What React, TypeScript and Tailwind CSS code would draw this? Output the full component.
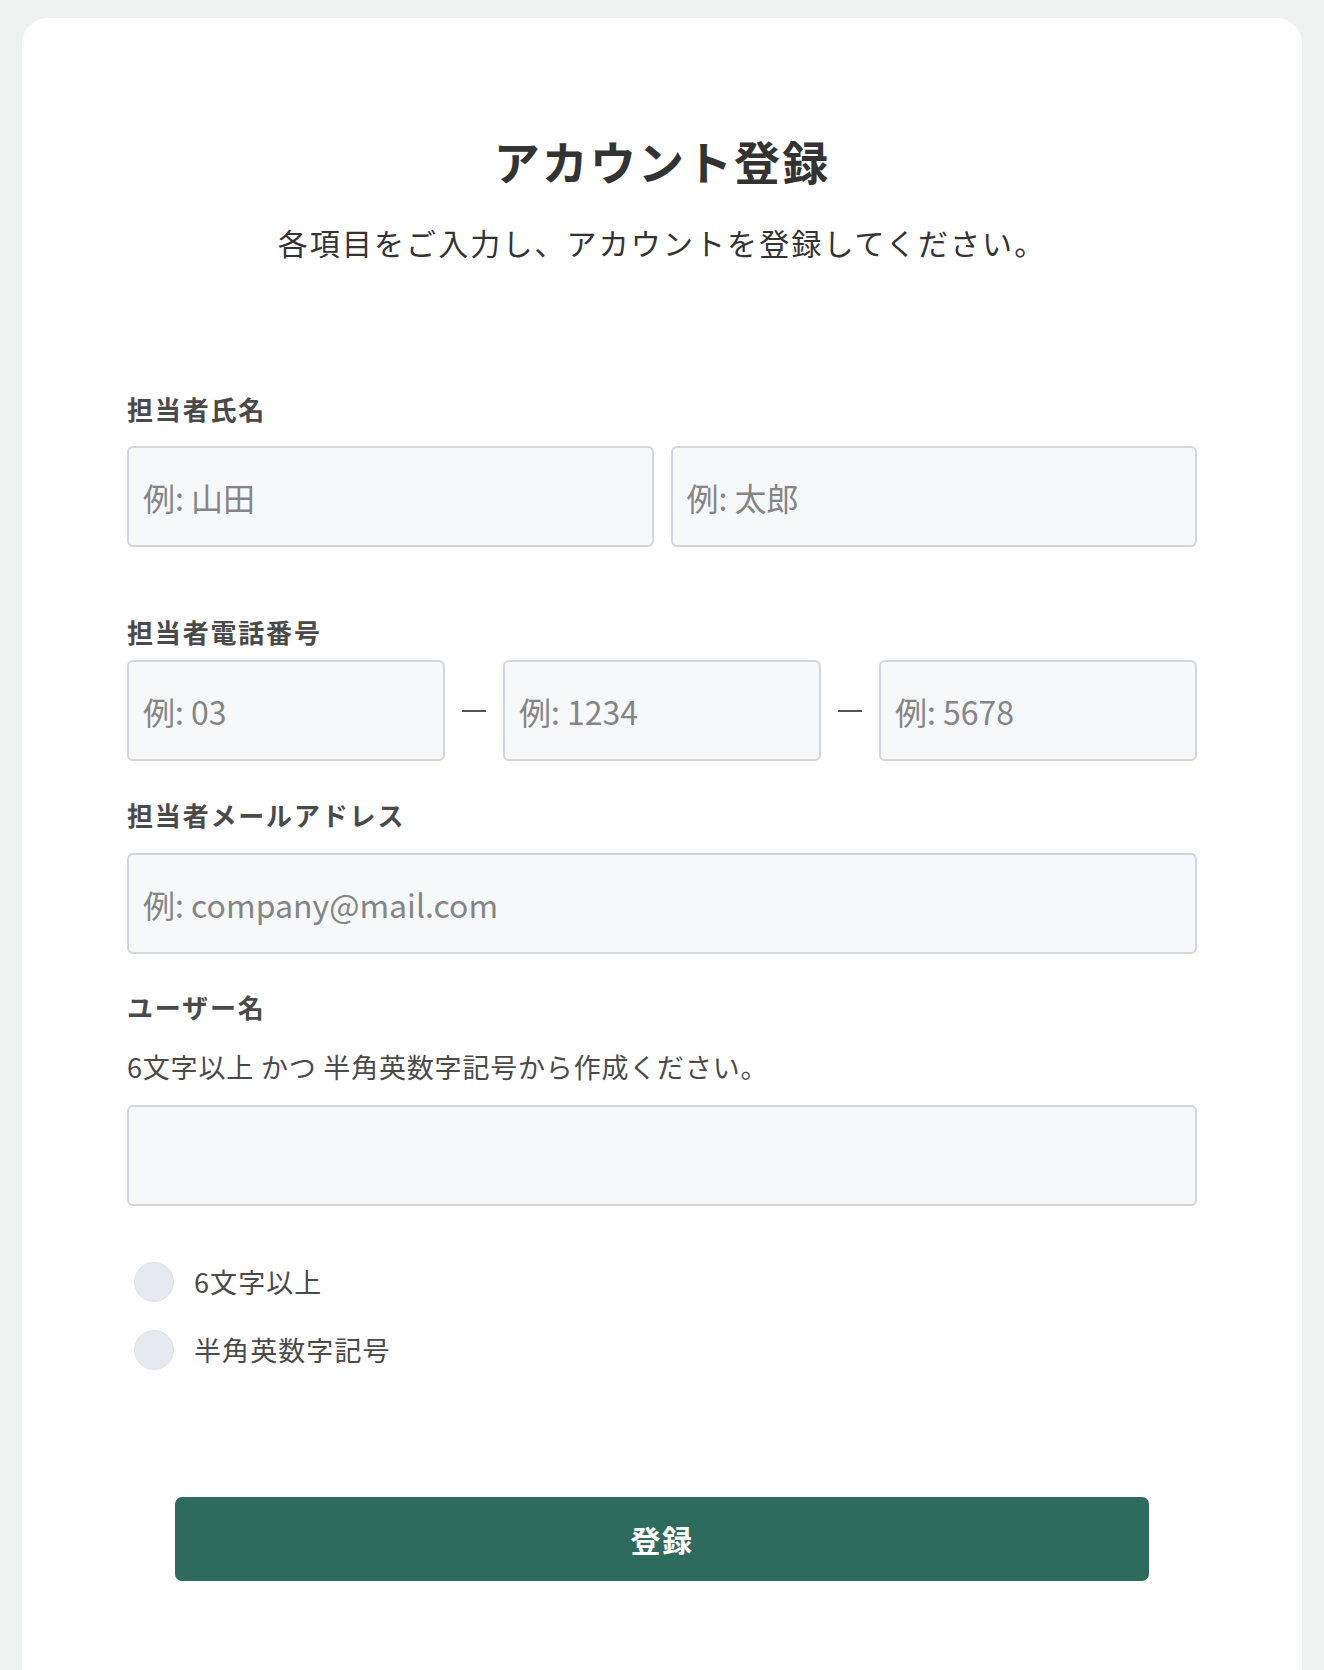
import { useState } from "react"

const inputClass =
  "block w-full h-[101px] rounded-[6px] border-2 border-[#d3d6dc] bg-[#f7f8fa] px-[14px] text-[32px] text-[#333] placeholder:text-[#858585] outline-none focus:border-[#2f6b5c]"

function Label({ children }: { children: React.ReactNode }) {
  return <p className="text-[26px] leading-[40px] font-bold tracking-[0.07em] text-[#4a4a4a]">{children}</p>
}

function Rule({ ok, text }: { ok: boolean; text: string }) {
  return (
    <div className="flex items-center h-[40px]">
      <span
        className={
          ok
            ? "ml-[7px] w-[40px] h-[40px] rounded-full bg-[#2f6b5c]"
            : "ml-[7px] w-[40px] h-[40px] rounded-full bg-[#e6e9f0] border border-[#dfe2e8]"
        }
      />
      <span className="ml-[20px] text-[27px] tracking-[0.04em] text-[#4a4a4a]">{text}</span>
    </div>
  )
}

export default function App() {
  const [username, setUsername] = useState("")
  const longEnough = username.length >= 6
  const halfWidth = username.length > 0 && /^[\x21-\x7e]+$/.test(username)

  return (
    <div
      className="min-h-screen bg-[#eff1f0] pt-[18px] px-[22px] overflow-hidden"
      style={{ fontFamily: '"Noto Sans CJK JP", "Noto Sans", sans-serif' }}
    >
      <div className="bg-white rounded-t-[26px] min-h-[1700px] pt-[110px] px-[105px] pb-[120px]">
        <h1 className="text-center text-[46px] leading-[64px] font-bold tracking-[0.045em] text-[#333]">
          アカウント登録
        </h1>
        <p className="mt-[28px] text-center text-[30px] leading-[44px] tracking-[0.07em] text-[#333]">
          各項目をご入力し、アカウントを登録してください。
        </p>

        <form className="mt-[125px]" onSubmit={(e) => e.preventDefault()}>
          <Label>担当者氏名</Label>
          <div className="mt-[17px] grid grid-cols-2 gap-[17px]">
            <input className={inputClass} placeholder="例: 山田" />
            <input className={inputClass} placeholder="例: 太郎" />
          </div>

          <div className="mt-[65px]">
            <Label>担当者電話番号</Label>
          </div>
          <div className="mt-[8px] flex items-center gap-[17px]">
            <input className={inputClass} placeholder="例: 03" />
            <span className="shrink-0 w-[24px] h-[2px] bg-[#555]" />
            <input className={inputClass} placeholder="例: 1234" />
            <span className="shrink-0 w-[24px] h-[2px] bg-[#555]" />
            <input className={inputClass} placeholder="例: 5678" />
          </div>

          <div className="mt-[34px]">
            <Label>担当者メールアドレス</Label>
          </div>
          <input className={"mt-[18px] " + inputClass} placeholder="例: company@mail.com" />

          <div className="mt-[33px]">
            <Label>ユーザー名</Label>
          </div>
          <p className="mt-[20px] text-[27px] leading-[40px] tracking-[0.03em] text-[#4a4a4a]">
            6文字以上 かつ 半角英数字記号から作成ください。
          </p>
          <input
            className={"mt-[18px] " + inputClass}
            value={username}
            onChange={(e) => setUsername(e.target.value)}
          />

          <div className="mt-[56px] flex flex-col gap-[28px]">
            <Rule ok={longEnough} text="6文字以上" />
            <Rule ok={halfWidth} text="半角英数字記号" />
          </div>

          <div className="mt-[127px] px-[48px]">
            <button
              type="submit"
              className="w-full h-[84px] rounded-[7px] bg-[#2f6b5c] text-white text-[30px] font-bold tracking-[0.05em]"
            >
              登録
            </button>
          </div>
        </form>
      </div>
    </div>
  )
}
